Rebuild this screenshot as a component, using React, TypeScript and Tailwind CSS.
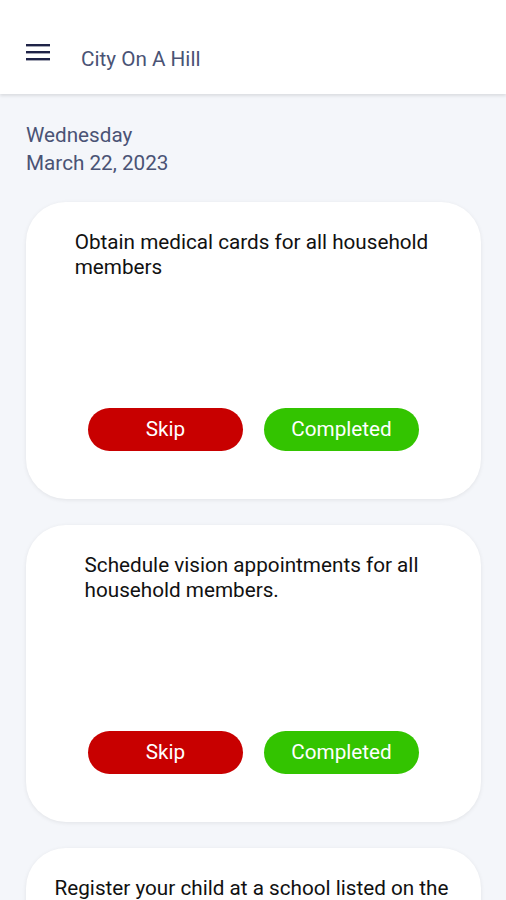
import React from 'react';

type Task = { id: number; lines: string[] };

const TASKS: Task[] = [
  { id: 1, lines: ['Obtain medical cards for all household', 'members'] },
  { id: 2, lines: ['Schedule vision appointments for all', 'household members.'] },
  { id: 3, lines: ['Register your child at a school listed on the', 'district website'] },
];

const TaskCard: React.FC<{ task: Task }> = ({ task }) => (
  <div className="bg-white rounded-[40px] shadow-[0_1px_4px_rgba(0,0,0,0.08)] h-[297px] flex flex-col pt-[28px] pb-[48px] shrink-0">
    <div className="pr-[4px]">
      <p className="w-fit mx-auto text-[20.7px] leading-[25px] text-[#111] whitespace-nowrap">
        {task.lines.map((l, i) => (
          <React.Fragment key={i}>
            {l}
            {i < task.lines.length - 1 && <br />}
          </React.Fragment>
        ))}
      </p>
    </div>
    <div className="mt-auto flex justify-center gap-[21px]">
      <button className="w-[155px] h-[43px] rounded-full bg-[#c80000] text-white text-[20.7px]">Skip</button>
      <button className="w-[155px] h-[43px] rounded-full bg-[#33c400] text-white text-[20.7px]">Completed</button>
    </div>
  </div>
);

const App: React.FC = () => {
  return (
    <div className="w-[506px] h-[900px] overflow-hidden bg-[#f4f6fa] font-['Roboto',sans-serif] flex flex-col">
      <header className="h-[94px] bg-white shadow-[0_2px_3px_rgba(0,0,0,0.1)] flex items-end pb-[19px] shrink-0 relative z-10">
        <svg width="24" height="18" viewBox="0 0 24 18" className="ml-[26px] mb-[14px]">
          <rect x="0" y="1" width="24" height="2.4" fill="#1f2347" />
          <rect x="0" y="8" width="24" height="2.4" fill="#1f2347" />
          <rect x="0" y="15" width="24" height="2.4" fill="#1f2347" />
        </svg>
        <span className="ml-[31px] text-[20.7px] text-[#4a5375]">City On A Hill</span>
      </header>
      <div className="px-[26px] pr-[25px] pt-[27px] flex flex-col">
        <div className="text-[20.7px] leading-[28px] text-[#4a5375]">
          <div>Wednesday</div>
          <div>March 22, 2023</div>
        </div>
        <div className="mt-[25px] flex flex-col gap-[26px]">
          {TASKS.map((t) => (
            <TaskCard key={t.id} task={t} />
          ))}
        </div>
      </div>
    </div>
  );
};

export default App;
